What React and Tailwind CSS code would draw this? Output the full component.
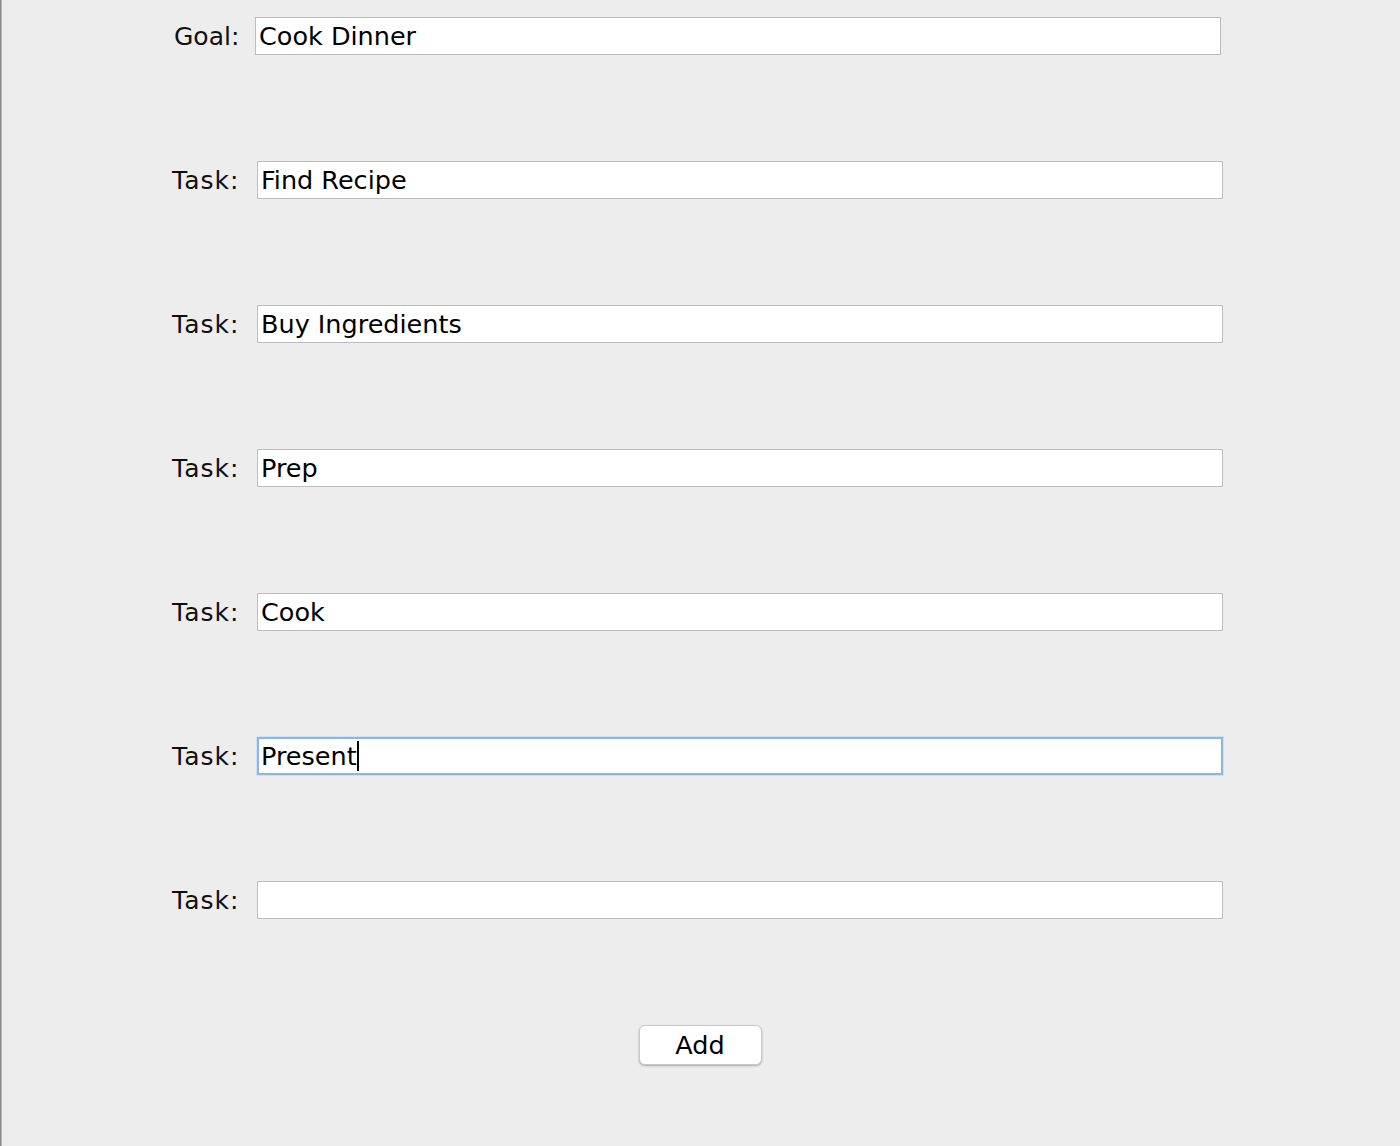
const tasks = ['Find Recipe', 'Buy Ingredients', 'Prep', 'Cook', 'Present', ''];

function Field({ value, focused }) {
  return (
    <div
      className={
        'w-[966px] h-[38px] bg-white flex items-center pl-[3px] pt-[2px] text-[25.5px] text-black leading-none ' +
        (focused
          ? 'border-2 border-[#8ab6ee] shadow-[0_0_0_1px_#cfe0f7]'
          : 'border border-[#bdbdbd]')
      }
    >
      <span className={focused ? '-ml-px' : ''}>{value}</span>
      {focused && <span className="w-[2px] h-[30px] -mt-[2px] bg-black" />}
    </div>
  );
}

export default function App() {
  return (
    <div
      className="flex h-[1146px] w-[1400px] bg-[#ededed] overflow-hidden"
      style={{ fontFamily: '"DejaVu Sans", "Liberation Sans", sans-serif' }}
    >
      <div className="w-[2px] h-full bg-[#b4b4b4] border-l border-[#8a8a8a]" />
      <div className="flex-1 flex flex-col gap-[106px] pt-[17px]">
        <div className="flex items-center h-[38px] pl-[172px]">
          <span className="w-[81px] pt-[1px] text-[25px] leading-none text-[#111]">Goal:</span>
          <Field value="Cook Dinner" />
        </div>
        {tasks.map((t, i) => (
          <div key={i} className="flex items-center h-[38px] pl-[170px]">
            <span className="w-[85px] pt-[1px] text-[25px] leading-none tracking-[1px] text-[#111]">Task:</span>
            <Field value={t} focused={t === 'Present'} />
          </div>
        ))}
        <div className="flex justify-center h-[40px] -ml-[2px]">
          <button
            type="button"
            className="w-[123px] h-[40px] pt-[2px] bg-white rounded-[6px] border border-[#c8c8c8] shadow-[0_1px_2px_rgba(0,0,0,0.3)] text-[25.5px] text-black leading-none"
          >
            Add
          </button>
        </div>
      </div>
    </div>
  );
}
